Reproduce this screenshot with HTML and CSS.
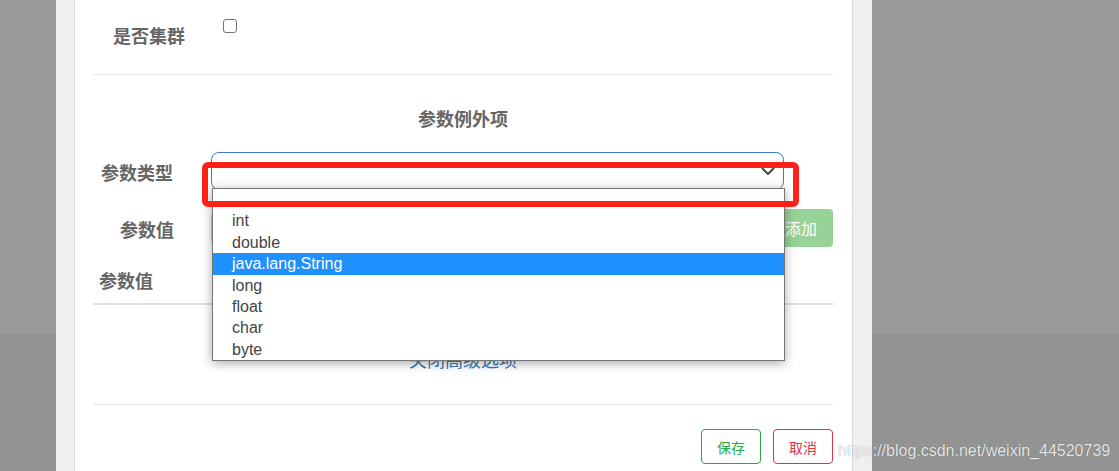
FILE: index.html
```html
<!DOCTYPE html>
<html lang="zh-CN">
<head>
    <meta charset="UTF-8">
    <meta name="viewport" content="width=device-width, initial-scale=1.0">
    <title>参数例外项</title>
    <link rel="stylesheet" href="styles.css">
</head>
<body>

<div class="backdrop">
    <div class="frame">
        <div class="panel">
            <div class="row-cluster">
                <label class="label-cluster">是否集群</label>
                <input type="checkbox" class="check">
            </div>
            <hr class="divider">

            <h4 class="section-title">参数例外项</h4>

            <div class="form-row">
                <label class="label-type">参数类型</label>
                <div class="select-wrap">
                    <div class="select-box">
                        <svg class="chevron" width="14" height="8" viewBox="0 0 14 8">
                            <polyline points="1,1 7,7 13,1" fill="none" stroke="#444" stroke-width="2"/>
                        </svg>
                    </div>
                    <ul class="options">
                        <li>&nbsp;</li>
                        <li>int</li>
                        <li>double</li>
                        <li class="active">java.lang.String</li>
                        <li>long</li>
                        <li>float</li>
                        <li>char</li>
                        <li>byte</li>
                    </ul>
                    <div class="mark"></div>
                </div>
            </div>

            <div class="form-row row-value">
                <label class="label-value">参数值</label>
                <input type="text" class="text-input">
                <button class="btn-add">添加</button>
            </div>

            <table class="value-table">
                <thead>
                    <tr><th>参数值</th></tr>
                </thead>
            </table>

            <div class="toggle"><a href="#">关闭高级选项</a></div>

            <hr class="divider divider-bottom">

            <div class="footer">
                <button class="btn-save">保存</button>
                <button class="btn-cancel">取消</button>
            </div>
        </div>
    </div>
</div>

<div class="watermark">https://blog.csdn.net/weixin_44520739</div>

</body>
</html>
```

FILE: styles.css
```css
html, body {
    margin: 0;
    height: 100%;
    overflow: hidden;
}
body {
    font-family: "Liberation Sans", "Noto Sans CJK SC", sans-serif;
    background: linear-gradient(#999999 334px, #939393 334px); /* modal backdrop */
    position: relative;
}
.backdrop {
    padding-left: 56px;
    height: 100%;
}
.frame {
    width: 816px;
    height: 100%;
    box-sizing: border-box;
    background-color: #efefef;
    padding: 0 19px 0 18px;
}
.panel {
    height: 100%;
    box-sizing: border-box;
    background-color: #ffffff;
    border-left: 1px solid #d9d9d9;
    border-right: 1px solid #d9d9d9;
    padding: 0 19px 0 18px;
}
label, .section-title, .value-table th {
    font-weight: bold;
    font-size: 18px;
    line-height: 18px;
    color: #666666;
}
.row-cluster {
    display: flex;
    align-items: flex-start;
    height: 74px;
    box-sizing: border-box;
    padding-top: 19px;
}
.label-cluster {
    width: 110px;
    margin-left: 20px;
    margin-top: 9px;
}
.check {
    appearance: none;
    width: 14px;
    height: 14px;
    margin: 0;
    border: 1px solid #767676;
    border-radius: 3px;
    background-color: #ffffff;
}
.divider {
    margin: 0;
    border: none;
    border-top: 1px solid #e5e5e5;
}
.section-title {
    margin: 36px 0 23px;
    text-align: center;
}
.form-row {
    display: flex;
    align-items: center;
    height: 38px;
}
.label-type {
    width: 110px;
    padding-left: 8px;
    padding-top: 5px;
}
.select-wrap {
    position: relative;
    width: 573px;
    height: 38px;
}
.select-box {
    height: 100%;
    box-sizing: border-box;
    border: 1px solid #3b7cc0;
    border-radius: 8px;
    background-color: #ffffff;
    display: flex;
    align-items: center;
    justify-content: flex-end;
    padding-right: 8px;
}
.options {
    position: absolute;
    left: 1px;
    top: 36px;
    width: 573px;
    margin: 0;
    padding: 0;
    list-style: none;
    box-sizing: border-box;
    border: 1px solid #767676;
    background-color: #ffffff;
    box-shadow: 0 2px 10px rgba(0, 0, 0, 0.35);
    z-index: 2;
}
.options li {
    font-size: 16px;
    line-height: 21.4px;
    padding-left: 19px;
    color: #444444;
}
.options li.active {
    background-color: #1e90ff;
    color: #ffffff;
}
.mark {
    position: absolute;
    left: -9px;
    top: 10px;
    width: 597px;
    height: 45px;
    box-sizing: border-box;
    border: 6px solid #ff2117;
    border-radius: 6px;
    z-index: 3;
}
.row-value {
    margin-top: 19px;
}
.label-value {
    width: 91px;
    padding-left: 27px;
    padding-top: 5px;
}
.text-input {
    width: 549px;
    height: 38px;
    box-sizing: border-box;
    margin: 0 10px 0 0;
    border: 1px solid #cccccc;
    border-radius: 8px;
}
.btn-add {
    width: 64px;
    height: 38px;
    border: none;
    border-radius: 4px;
    background-color: #97d396;
    color: #ffffff;
    font-family: inherit;
    font-size: 16px;
    padding: 0;
}
.value-table {
    width: 100%;
    border-collapse: collapse;
    margin-top: 22px;
}
.value-table th {
    text-align: left;
    padding: 4px 6px 12px;
    border-bottom: 2px solid #dddddd;
}
.toggle {
    margin-top: 47px;
    text-align: center;
    font-size: 18px;
    line-height: 18px;
}
.toggle a {
    color: #337ab7;
    text-decoration: none;
}
.divider-bottom {
    margin-top: 34px;
}
.footer {
    display: flex;
    justify-content: flex-end;
    gap: 12px;
    padding-top: 24px;
}
.footer button {
    width: 60px;
    height: 35px;
    background-color: #ffffff;
    border-radius: 4px;
    font-family: inherit;
    font-size: 14px;
    padding: 0;
}
.btn-save {
    border: 1px solid #28a745;
    color: #28a745;
}
.btn-cancel {
    border: 1px solid #dc3545;
    color: #dc3545;
}
.watermark {
    position: absolute;
    left: 838px;
    top: 442px;
    font-size: 16px;
    line-height: 18px;
    color: rgba(255, 255, 255, 0.85);
    text-shadow: 0 0 1px rgba(0, 0, 0, 0.4);
    white-space: nowrap;
}
```
